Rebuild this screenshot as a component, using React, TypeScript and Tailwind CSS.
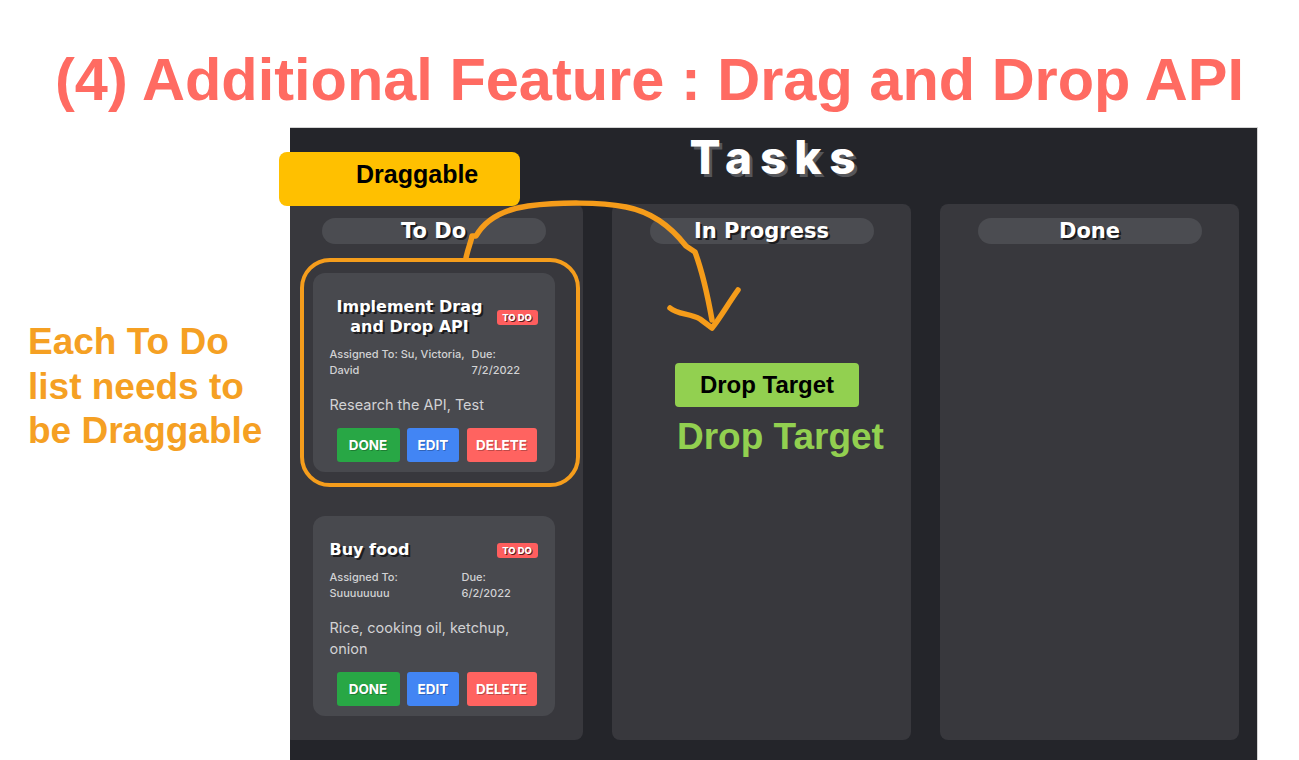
import React from "react";

const inter = { fontFamily: "Inter, 'Noto Sans', sans-serif" };
const dejavu = { fontFamily: "'DejaVu Sans', Inter, sans-serif" };

type Task = {
  title: string[];
  assigned: string[];
  due: string[];
  leftW: string;
  desc: string[];
};

const tasks: Task[] = [
  {
    title: ["Implement Drag", "and Drop API"],
    assigned: ["Assigned To: Su, Victoria,", "David"],
    due: ["Due:", "7/2/2022"],
    leftW: "w-[142px]",
    desc: ["Research the API, Test"],
  },
  {
    title: ["Buy food"],
    assigned: ["Assigned To:", "Suuuuuuuu"],
    due: ["Due:", "6/2/2022"],
    leftW: "w-[132px]",
    desc: ["Rice, cooking oil, ketchup,", "onion"],
  },
];

function Card({ t, first }: { t: Task; first: boolean }) {
  const centered = t.title.length > 1;
  return (
    <div
      className={`w-[242px] rounded-[12px] bg-[#48494e] px-[17px] pt-[24px] pb-[10px] ${first ? "mt-[29px]" : "mt-[44px]"}`}
      style={inter}
    >
      <div className="flex items-center justify-between">
        <div
          className={`${centered ? "w-[160px] text-center" : "text-left"} text-[16px] leading-[20px] font-bold text-white [text-shadow:2px_2px_0_#1c1c1e]`}
          style={dejavu}
        >
          {t.title.map((l) => (
            <div key={l}>{l}</div>
          ))}
        </div>
        <div className="h-[15px] w-[41px] rounded-[3px] bg-[#ff5e5e] text-center text-[9.5px] leading-[15px] font-extrabold text-white [text-shadow:1px_1px_0_#5a1a1a]">
          TO DO
        </div>
      </div>
      <div className="mt-[9px] flex text-[11px] leading-[16px] font-medium text-[#d2d2d4]">
        <div className={t.leftW}>
          {t.assigned.map((l) => (
            <div key={l}>{l}</div>
          ))}
        </div>
        <div>
          {t.due.map((l) => (
            <div key={l}>{l}</div>
          ))}
        </div>
      </div>
      <div className="mt-[16px] text-[14.5px] leading-[21px] text-[#d2d2d4]">
        {t.desc.map((l) => (
          <div key={l}>{l}</div>
        ))}
      </div>
      <div className="mt-[13px] flex gap-[7.5px] pl-[7px] text-[13.5px] font-bold text-white [text-shadow:1px_1px_0_rgba(0,0,0,0.25)]">
        <div className="flex h-[34px] w-[63px] items-center justify-center rounded-[3px] bg-[#28a745]">DONE</div>
        <div className="flex h-[34px] w-[52px] items-center justify-center rounded-[3px] bg-[#4285f4]">EDIT</div>
        <div className="flex h-[34px] w-[70px] items-center justify-center rounded-[3px] bg-[#ff6360]">DELETE</div>
      </div>
    </div>
  );
}

function Column({ title, children, first }: { title: string; children?: React.ReactNode; first?: boolean }) {
  return (
    <div
      className={`flex h-[536px] w-[299px] shrink-0 flex-col items-center rounded-[8px] bg-[#38383d] pt-[14px] ${first ? "-ml-[6px]" : ""}`}
    >
      <div
        className="h-[26px] w-[224px] rounded-full bg-[#4b4c51] text-center text-[21px] leading-[26px] font-bold text-white [text-shadow:2px_2px_0_#1c1c1e]"
        style={dejavu}
      >
        {title}
      </div>
      {children}
    </div>
  );
}

export default function App() {
  return (
    <div
      className="relative h-[760px] w-[1299px] overflow-hidden bg-white"
      style={{ fontFamily: "'Liberation Sans', Arial, sans-serif" }}
    >
      <h1 className="mt-[50px] h-[59px] text-center text-[59.5px] leading-[59px] font-bold text-[#ff6b62]">
        (4) Additional Feature : Drag and Drop API
      </h1>
      <div className="mt-[18px] flex">
        <div className="w-[290px] shrink-0 pl-[28px] pt-[193px] text-[37px] leading-[44.5px] font-bold text-[#f5a023]">
          <div>Each To Do</div>
          <div>list needs to</div>
          <div>be Draggable</div>
        </div>
        <div className="h-[633px] w-[968px] shrink-0 overflow-hidden border-t border-r border-[#d4d4d4] bg-[#24252a]">
          <div
            className="mt-[4px] h-[72px] text-center text-[46px] leading-[50px] font-extrabold tracking-[0.17em] text-white [text-shadow:3px_3px_0_#55565a]"
            style={{ ...inter, paddingLeft: "6px" }}
          >
            Tasks
          </div>
          <div className="flex gap-[29px]">
            <Column title="To Do" first>
              {tasks.map((t, i) => (
                <Card key={i} t={t} first={i === 0} />
              ))}
            </Column>
            <Column title="In Progress" />
            <Column title="Done" />
          </div>
        </div>
      </div>

      {/* annotations */}
      <div className="absolute left-[300px] top-[258px] h-[229px] w-[280px] rounded-[30px] border-[4px] border-[#f59d1c]" />
      <div className="absolute left-[279px] top-[152px] h-[54px] w-[241px] rounded-[8px] bg-[#ffc000] pl-[77px] pt-[10px] text-[25px] leading-[25px] font-bold text-black">
        Draggable
      </div>
      <svg className="pointer-events-none absolute left-0 top-0" width="1299" height="760" viewBox="0 0 1299 760">
        <path
          d="M466,258 C468,248 471,242 472,236 L476,236 C484,222 500,210 528,206 C560,202 600,202 626,207 C652,212 672,228 686,246 L695,252 C701,268 707,292 712,320"
          fill="none"
          stroke="#f59c1a"
          strokeWidth="5.5"
          strokeLinecap="round"
          strokeLinejoin="round"
        />
        <path
          d="M670,308 C678,315 690,313 700,319 L712,328 C720,318 728,304 738,290"
          fill="none"
          stroke="#f59c1a"
          strokeWidth="5.5"
          strokeLinecap="round"
          strokeLinejoin="round"
        />
      </svg>
      <div className="absolute left-[675px] top-[363px] flex h-[44px] w-[184px] items-center justify-center rounded-[4px] bg-[#92d050] text-[24px] font-bold text-black">
        Drop Target
      </div>
      <div className="absolute left-[677px] top-[419px] text-[37px] leading-[36px] font-bold text-[#92d050]">
        Drop Target
      </div>
    </div>
  );
}
